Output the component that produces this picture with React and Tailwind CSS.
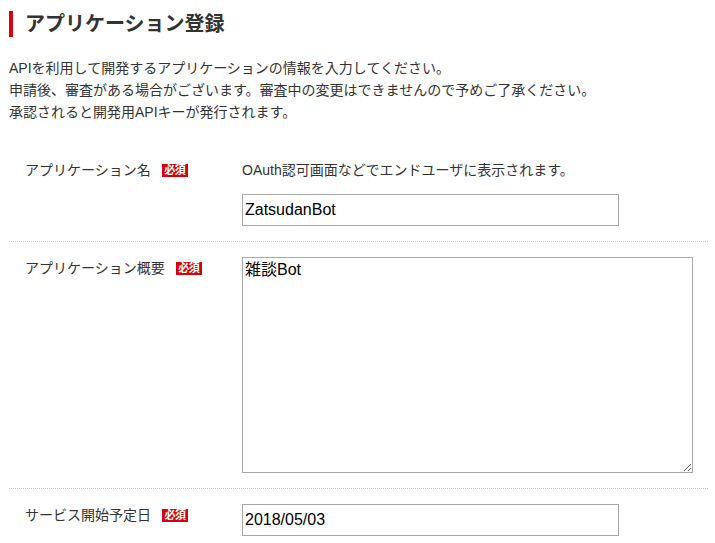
const FONT = "font-['Liberation_Sans','Noto_Sans_CJK_JP',sans-serif]";

function Required() {
  return (
    <span className="ml-[11px] inline-flex h-[13px] w-[26px] items-center justify-center bg-[#d6000f] text-[11px] leading-none font-bold tracking-[-0.5px] text-white">
      必須
    </span>
  );
}

function Row({ label, children, last }) {
  return (
    <div
      className={`grid grid-cols-[233px_1fr] py-[15px] ${
        last ? '' : 'border-b border-dotted border-[#c8c8c8]'
      }`}
    >
      <div className="flex h-[22px] items-center pl-[16px] text-[14px] text-[#333]">
        <span>{label}</span>
        <Required />
      </div>
      <div>{children}</div>
    </div>
  );
}

export default function App() {
  return (
    <div className={`${FONT} min-h-[543px] bg-white px-[9px] pt-[11px] text-[#333]`}>
      <h1 className="flex h-[26px] items-center border-l-4 border-[#d6000f] pl-[12px] text-[20px] font-bold leading-none text-[#333]">
        アプリケーション登録
      </h1>

      <div className="mt-[20px] text-[14px] leading-[22px]">
        <p>APIを利用して開発するアプリケーションの情報を入力してください。</p>
        <p>申請後、審査がある場合がございます。審査中の変更はできませんので予めご了承ください。</p>
        <p>承認されると開発用APIキーが発行されます。</p>
      </div>

      <div className="mt-[21px] w-[699px]">
        <Row label="アプリケーション名">
          <p className="text-[14px] leading-[22px]">OAuth認可画面などでエンドユーザに表示されます。</p>
          <input
            type="text"
            defaultValue="ZatsudanBot"
            className="mt-[13px] block h-[32px] w-[377px] border border-[#a9a9a9] px-[2px] text-[16px] text-black outline-none"
          />
        </Row>
        <Row label="アプリケーション概要">
          <textarea
            defaultValue="雑談Bot"
            className="block h-[216px] w-[451px] border border-[#a9a9a9] px-[2px] py-[2px] text-[16px] leading-[20px] text-black outline-none"
          />
        </Row>
        <Row label="サービス開始予定日" last>
          <input
            type="text"
            defaultValue="2018/05/03"
            className="block h-[32px] w-[377px] border border-[#a9a9a9] px-[2px] text-[16px] text-black outline-none"
          />
        </Row>
      </div>
    </div>
  );
}
